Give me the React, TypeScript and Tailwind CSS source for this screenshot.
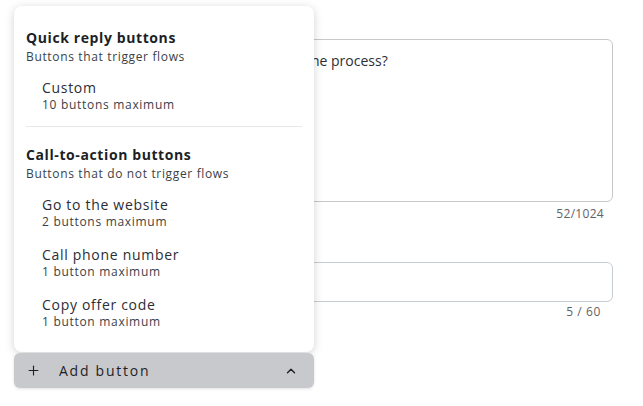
import { Plus, ChevronUp } from 'lucide-react';

const font = { fontFamily: '"Open Sans", "Liberation Sans", sans-serif' };

type Option = { title: string; hint: string };

const sections: { heading: string; sub: string; options: Option[] }[] = [
  {
    heading: 'Quick reply buttons',
    sub: 'Buttons that trigger flows',
    options: [{ title: 'Custom', hint: '10 buttons maximum' }],
  },
  {
    heading: 'Call-to-action buttons',
    sub: 'Buttons that do not trigger flows',
    options: [
      { title: 'Go to the website', hint: '2 buttons maximum' },
      { title: 'Call phone number', hint: '1 button maximum' },
      { title: 'Copy offer code', hint: '1 button maximum' },
    ],
  },
];

function Menu() {
  return (
    <div className="absolute left-[14px] top-[6px] w-[300px] h-[346px] bg-white rounded-lg shadow-[0_2px_10px_rgba(0,0,0,0.18)] px-3 pt-[22px]">
      {sections.map((s, i) => (
        <div key={s.heading}>
          {i > 0 && <div className="h-px bg-gray-200 mt-[13px] mb-[18px]" />}
          <div className="text-[14px] leading-[20px] font-bold text-[#1c1f26] tracking-[0.6px]">{s.heading}</div>
          <div className="text-[12px] leading-[18px] text-[#3b3f47] tracking-[0.65px]">{s.sub}</div>
          <div className="mt-[13px] flex flex-col gap-[16px]">
            {s.options.map((o) => (
              <div key={o.title} className="pl-4">
                <div className="text-[14px] leading-[18px] text-[#2b2e35] tracking-[0.7px]">{o.title}</div>
                <div className="text-[12px] leading-[16px] text-[#3b3f47] tracking-[0.7px]">{o.hint}</div>
              </div>
            ))}
          </div>
        </div>
      ))}
    </div>
  );
}

export default function App() {
  return (
    <div className="relative w-[643px] h-[406px] bg-white" style={font}>
      <div className="pt-[39px] pl-[14px] pr-[30px]">
        <div className="h-[163px] border border-[#c6c8cc] rounded-md px-4 pt-[10px] text-[14px] text-[#2b2e35]">
          How would you rate your experience with the process?
        </div>
        <div className="text-right text-[12px] text-[#5f6368] pr-[9px] mt-[4px] leading-[16px] tracking-[0.3px]">52/1024</div>
        <div className="mt-[40px] h-[40px] border border-[#c6ccd4] rounded-md" />
        <div className="text-right text-[12px] text-[#5f6368] pr-[12px] mt-[2px] leading-[16px] tracking-[0.6px]">5 / 60</div>
      </div>
      <Menu />
      <button className="absolute left-[14px] top-[353px] w-[300px] h-[35px] rounded-md bg-[#c8c9cc] shadow-[0_1px_3px_rgba(0,0,0,0.12)] flex items-center pl-[12px] pr-[16px] text-[#1c1f26]">
        <Plus className="w-[15px] h-[15px]" strokeWidth={1.8} />
        <span className="ml-[18px] text-[14px] tracking-[1.75px] font-medium">Add button</span>
        <ChevronUp className="ml-auto w-[14px] h-[14px]" strokeWidth={2.4} />
      </button>
    </div>
  );
}
